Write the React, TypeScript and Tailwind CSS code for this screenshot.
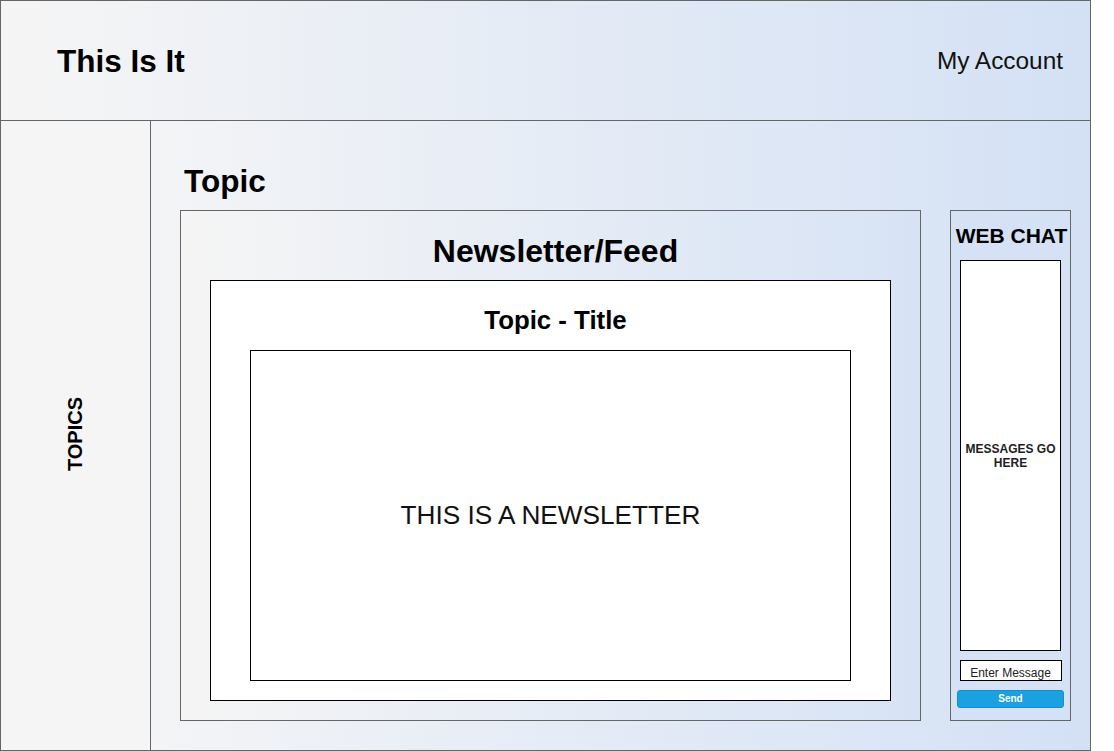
import React from 'react';

const App: React.FC = () => {
  return (
    <div className="w-[1114px] h-[751px] bg-white font-['Liberation_Sans',Arial,sans-serif] text-black">
      <div className="w-[1091px] h-[751px] border border-[#666666] flex flex-col">
        {/* header */}
        <header className="h-[120px] border-b border-[#666666] flex items-center justify-between pl-[56px] pr-[27px] bg-linear-to-r from-[#f5f5f5] to-[#d4e1f5]">
          <h1 className="text-[31.5px] font-bold leading-[36px]">This Is It</h1>
          <span className="text-[24.4px] leading-[28px] text-[#111]">My Account</span>
        </header>

        <div className="flex-1 flex">
          {/* sidebar */}
          <aside className="w-[150px] border-r border-[#666666] bg-[#f5f5f5] flex items-center justify-center">
            <span className="-rotate-90 text-[20px] font-bold whitespace-nowrap -translate-y-[2px]">TOPICS</span>
          </aside>

          {/* main */}
          <main className="flex-1 flex flex-col pl-[29px] pt-[42px] bg-linear-to-r from-[#f3f4f6] to-[#d4e1f5]">
            <h2 className="h-[36px] leading-[36px] text-[31.5px] font-bold ml-[4px]">Topic</h2>

            <div className="flex gap-[29px] mt-[11px]">
              <section className="w-[741px] h-[511px] border border-[#666666] flex flex-col items-center pt-[20px] bg-linear-to-r from-[#f5f5f5] to-[#d7e3f5]">
                <h3 className="h-[40px] leading-[40px] text-[32px] font-bold mb-[9px] pl-[10px]">Newsletter/Feed</h3>
                <div className="w-[681px] h-[421px] border border-black bg-white flex flex-col items-center pt-[24px]">
                  <h4 className="h-[30px] leading-[30px] text-[25.8px] font-bold mb-[15px] pl-[10px]">Topic - Title</h4>
                  <div className="w-[601px] h-[331px] border border-black flex items-center justify-center">
                    <p className="text-[26.2px] text-[#111]">THIS IS A NEWSLETTER</p>
                  </div>
                </div>
              </section>

              <section className="w-[121px] h-[511px] border border-[#666666] bg-[#d5e2f5] flex flex-col items-center pt-[13px]">
                <h3 className="h-[24px] leading-[24px] text-[21px] font-bold whitespace-nowrap pl-[2px]">WEB CHAT</h3>
                <div className="w-[101px] h-[391px] mt-[12px] border border-black bg-white flex items-center justify-center">
                  <p className="text-[12px] leading-[14px] font-bold text-center text-[#222]">
                    MESSAGES GO
                    <br />
                    HERE
                  </p>
                </div>
                <div className="w-[102px] h-[21px] mt-[9px] border border-black bg-white overflow-hidden text-center pt-[5px]">
                  <span className="block text-[12px] leading-[14px] text-[#222]">Enter Message</span>
                </div>
                <button className="w-[107px] h-[18px] mt-[9px] rounded-[3px] bg-[#1ba1e2] border border-[#1590cf] text-white text-[10px] font-bold leading-[16px]">
                  Send
                </button>
              </section>
            </div>
          </main>
        </div>
      </div>
    </div>
  );
};

export default App;
